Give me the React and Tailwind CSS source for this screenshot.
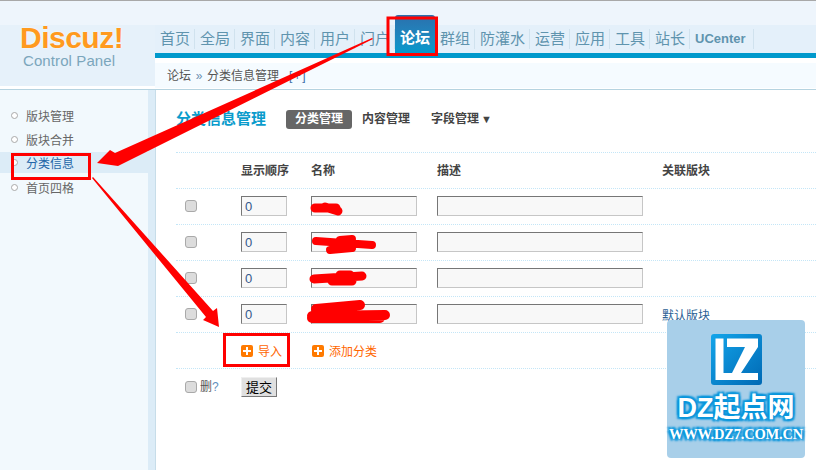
const SANS = 'font-["Liberation_Sans","Noto_Sans_CJK_SC",sans-serif]';

const nav = ["首页", "全局", "界面", "内容", "用户", "门户", "论坛", "群组", "防灌水", "运营", "应用", "工具", "站长", "UCenter"];
const side = ["版块管理", "版块合并", "分类信息", "首页四格"];

function Check() {
  return <span className="block w-[12px] h-[12px] rounded-[3px] bg-[#dcdcdc] border border-[#a9a9a9]" />;
}

function Input({ w, value }) {
  return (
    <div className={`h-[20px] ${w} bg-[#f8f8f8] border border-t-[#767676] border-l-[#767676] border-r-[#c6c6c6] border-b-[#c6c6c6] text-[13px] leading-[19px] pl-[3px] text-[#36598c]`}>
      {value}
    </div>
  );
}

function Row({ assoc }) {
  return (
    <div className="h-[36px] flex items-center border-t border-dotted border-[#c4e6f7]">
      <div className="w-[65px] pl-[9px] -mt-[1px]"><Check /></div>
      <div className="w-[70px] pb-[1px]"><Input w="w-[46px]" value="0" /></div>
      <div className="w-[126px] pb-[1px]"><Input w="w-[106px]" /></div>
      <div className="w-[225px] pb-[1px]"><Input w="w-[206px]" /></div>
      <div className="text-[12px] text-[#2b5f95] pt-[2px]">{assoc}</div>
    </div>
  );
}

function Plus() {
  return (
    <span className="relative block w-[12px] h-[12px] rounded-[2px] bg-[#ff7a00]">
      <span className="absolute left-[2px] top-[5px] w-[8px] h-[2px] bg-white" />
      <span className="absolute left-[5px] top-[2px] w-[2px] h-[8px] bg-white" />
    </span>
  );
}

function NavItem({ label, active }) {
  if (active) {
    return (
      <div className="shrink-0 w-[40px] h-[38px] -mt-[10px] rounded-t-[3px] bg-gradient-to-b from-[#2a70ad] to-[#0099cc] text-white font-bold text-[15px] flex items-end justify-center pb-[4px] leading-[22px]">
        {label}
      </div>
    );
  }
  const en = label === "UCenter";
  const width = en ? "w-[64px]" : label.length === 3 ? "w-[55px]" : "w-[40px]";
  return (
    <div className={`shrink-0 h-[20px] flex items-center pl-[5px] border-r border-[#d0e2ee] text-[#5f94ae] ${width} ${en ? "text-[13px] font-bold" : "text-[15px]"}`}>
      {label}
    </div>
  );
}

export default function App() {
  return (
    <div className={`relative w-[816px] h-[470px] overflow-hidden bg-white ${SANS}`}>
      {/* header */}
      <div className="flex h-[90px] bg-[#eef5fc] border-t border-[#a8a8a8]">
        <div className="w-[155px] flex flex-col">
          <div className="h-[24px]" />
          <div className="h-[61px] bg-[#e6f1fa] flex flex-col pl-[20px]">
            <div className="font-bold text-[30px] leading-[26px] tracking-[-0.5px] text-[#ff9a1f] [text-shadow:0_0_2px_#ffffff]">Discuz!</div>
            <div className="text-[15px] leading-[14px] mt-[3px] ml-[3px] tracking-[0.1px] text-[#7ba6bc]">Control Panel</div>
          </div>
          <div className="h-[3px] bg-white" />
          <div className="h-[1px] bg-[#b5d3e0]" />
        </div>
        <div className="flex-1 flex flex-col">
          <div className="h-[24px]" />
          <div className="h-[28px] bg-[#e4f0fa] flex items-center">
            {nav.map((n) => <NavItem key={n} label={n} active={n === "论坛"} />)}
          </div>
          <div className="h-[5px] bg-[#0099cc]" />
          <div className="h-[5px] bg-white" />
          <div className="h-[25px] bg-[#f5fbff] flex items-center pl-[12px] text-[12px] text-[#555]">
            论坛<span className="w-[16px] text-center text-[#6c8fb0] text-[12px]">»</span>分类信息管理<span className="ml-[10px] tracking-[1.5px] text-[#3d6fa8]">[+]</span>
          </div>
          <div className="h-[1px] bg-white" />
          <div className="h-[1px] bg-[#b5d3e0]" />
        </div>
      </div>

      {/* body */}
      <div className="flex h-[380px]">
        <div className="w-[148px] bg-[#f2f9fd] pt-[14px] text-[12px] text-[#666]">
          {side.map((s, i) => (
            <div key={s} className={`pl-[11px] pt-[2px] flex items-center gap-[9px] ${i === 2 ? "h-[21px] mb-[3px] bg-[#dcecf7] text-[#2366a8]" : "h-[24px]"}`}>
              <span className="block w-[7px] h-[7px] rounded-full bg-white border border-[#a9a9a9] -mt-[3px]" />
              <span className="-ml-[1px]">{s}</span>
            </div>
          ))}
        </div>
        <div className="w-[7px] bg-[#dcecf7] border-r border-[#c7dde9] box-content" />
        <div className="flex-1 pl-[20px] pt-[19px]">
          <div className="flex items-center h-[20px]">
            <div className="w-[110px] text-[15px] font-bold text-[#0a9ccc]">分类信息管理</div>
            <div className="w-[66px] h-[19px] rounded-[3px] bg-[#666] text-white text-[12px] font-bold flex items-center justify-center">分类管理</div>
            <div className="ml-[10px] w-[69px] text-[12px] font-bold text-[#444]">内容管理</div>
            <div className="text-[12px] font-bold text-[#444] flex items-center gap-[2px]">字段管理<span className="text-[11px] leading-none">▼</span></div>
          </div>
          <div className="mt-[23px] border-b border-dotted border-[#c4e6f7]">
            <div className="h-[36px] flex items-center border-t border-dotted border-[#c4e6f7] text-[12px] font-bold text-[#444]">
              <div className="w-[65px]" />
              <div className="w-[70px]">显示顺序</div>
              <div className="w-[126px]">名称</div>
              <div className="w-[225px]">描述</div>
              <div>关联版块</div>
            </div>
            <Row />
            <Row />
            <Row />
            <Row assoc="默认版块" />
            <div className="h-[36px] flex items-center border-t border-dotted border-[#c4e6f7] text-[12px] text-[#ff6600]">
              <div className="w-[65px]" />
              <div className="w-[71px] flex items-center gap-[5px]"><Plus /><span className="pt-[2px]">导入</span></div>
              <div className="flex items-center gap-[5px]"><Plus /><span className="pt-[2px]">添加分类</span></div>
            </div>
          </div>
          <div className="flex items-center h-[36px] text-[12px] text-[#555]">
            <div className="w-[65px] pl-[9px] flex items-center gap-[3px]"><Check /><span>删<span className="text-[#5f8fc0]">?</span></span></div>
            <div className="w-[36px] h-[20px] bg-[#e0e0e0] border border-t-[#efefef] border-l-[#efefef] border-r-[#777] border-b-[#777] text-[13px] leading-[19px] text-center text-black">提交</div>
          </div>
        </div>
      </div>

      {/* watermark */}
      <div className="absolute left-[667px] top-[320px] w-[138px] h-[138px] rounded-[4px] bg-[#a8cfe9] flex flex-col items-center">
        <div className="mt-[14px] h-[51px]">
          <svg width="51" height="51" viewBox="0 0 51 51">
            <defs>
              <linearGradient id="lz" x1="0" x2="1" y1="0" y2="1">
                <stop offset="0" stopColor="#13a5ea" />
                <stop offset="1" stopColor="#0069b4" />
              </linearGradient>
            </defs>
            <rect width="51" height="51" rx="3" fill="url(#lz)" />
            <path d="M4.5 4.5H12.5V39H21V46H4.5Z" fill="#fff" />
            <path d="M16 4.5H47V13L30 39H47V46H21V39L34 13H16Z" fill="#fff" />
          </svg>
        </div>
        <div className="mt-[9px] font-bold text-[27px] leading-[28px] whitespace-nowrap text-white [text-shadow:0_0_2px_#0a96dc,0_0_3px_#0a96dc,2px_2px_2px_#0a96dc,-2px_-2px_2px_#0a96dc,2px_-2px_2px_#0a96dc,-2px_2px_2px_#0a96dc]">DZ起点网</div>
        <div className='mt-[4px] font-bold text-[14.5px] leading-[16px] tracking-[-0.2px] whitespace-nowrap text-white font-["Liberation_Serif",serif] [text-shadow:0_0_2px_#0a96dc,0_0_3px_#0a96dc,2px_2px_2px_#0a96dc,-2px_-2px_2px_#0a96dc,2px_-2px_2px_#0a96dc,-2px_2px_2px_#0a96dc]'>WWW.DZ7.COM.CN</div>
      </div>

      {/* annotations drawn on top of the screenshot */}
      <svg className="absolute left-0 top-0 pointer-events-none" width="816" height="470" viewBox="0 0 816 470">
        <polygon points="372,38 373,39 118,166 97,163 110,150 115,153" fill="#ff0000" />
        <polygon points="92,178 93,177 213,311 217,308 219,327 203,320 206,317" fill="#ff0000" />
        <rect x="388" y="18" width="48.5" height="36.5" fill="none" stroke="#ff0000" strokeWidth="3" />
        <rect x="12.5" y="154.5" width="77" height="24" fill="none" stroke="#ff0000" strokeWidth="3" />
        <rect x="224.5" y="334.5" width="64" height="31" fill="none" stroke="#ff0000" strokeWidth="3" />
        <g stroke="#ff0000" strokeLinecap="round" strokeLinejoin="round" fill="none">
          <path d="M315 208L336 208M325 207L338 211" strokeWidth="9" />
          <path d="M316 241L372 245M340 240L352 239M330 250L352 248" strokeWidth="8" />
          <path d="M314 279L362 276M332 281L352 281M340 275L350 275" strokeWidth="9" />
          <path d="M312 316L385 315M316 309L360 305M312 318L380 318" strokeWidth="10" />
        </g>
      </svg>
    </div>
  );
}
